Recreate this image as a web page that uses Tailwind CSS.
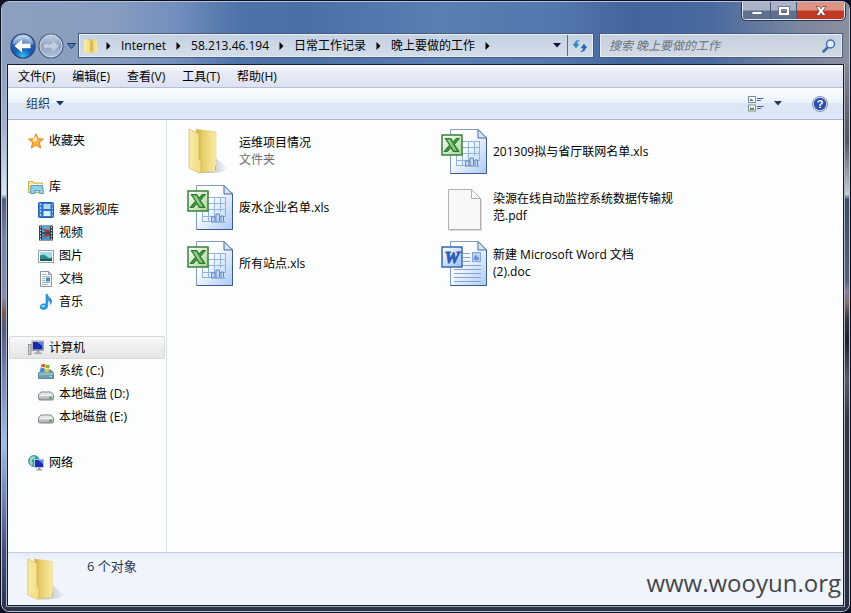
<!DOCTYPE html>
<html lang="zh-CN">
<head>
  <meta charset="UTF-8" />
  <meta name="viewport" content="width=device-width, initial-scale=1.0" />
  <title>晚上要做的工作</title>
  <script src="https://cdn.jsdelivr.net/npm/@tailwindcss/browser@4"></script>
</head>
<body class="flex h-screen flex-col bg-[#0b1020] p-px font-['Open_Sans','Noto_Sans_CJK_SC',sans-serif] text-xs text-black">

  <!-- Shared icons -->
  <svg class="absolute h-0 w-0" aria-hidden="true">
    <defs>
      <linearGradient id="page" x1="0" y1="0" x2="1" y2="1">
        <stop offset="0.35" stop-color="#ffffff" /><stop offset="1" stop-color="#a9c9f5" />
      </linearGradient>
      <linearGradient id="flap" x1="0" y1="0" x2="1" y2="0">
        <stop offset="0" stop-color="#f9eca8" /><stop offset="1" stop-color="#f2dc80" />
      </linearGradient>
      <linearGradient id="inner" x1="0" y1="0" x2="1" y2="0">
        <stop offset="0" stop-color="#cfae45" /><stop offset="0.35" stop-color="#e8ce6a" /><stop offset="1" stop-color="#f8eba8" />
      </linearGradient>
      <linearGradient id="shade" x1="0" y1="0" x2="1" y2="0">
        <stop offset="0" stop-color="#8d8f9c" stop-opacity="0.8" /><stop offset="1" stop-color="#8d8f9c" stop-opacity="0" />
      </linearGradient>
      <linearGradient id="green" x1="0" y1="0" x2="1" y2="1">
        <stop offset="0" stop-color="#ffffff" /><stop offset="1" stop-color="#a5d392" />
      </linearGradient>
      <linearGradient id="blue" x1="0" y1="0" x2="1" y2="1">
        <stop offset="0" stop-color="#ffffff" /><stop offset="1" stop-color="#9dbdf0" />
      </linearGradient>
      <linearGradient id="metal" x1="0" y1="0" x2="0" y2="1">
        <stop offset="0" stop-color="#f4f5f6" /><stop offset="1" stop-color="#a4a8ad" />
      </linearGradient>
      <radialGradient id="back" cx="0.5" cy="0.95" r="0.85">
        <stop offset="0" stop-color="#35c4f5" /><stop offset="0.45" stop-color="#1459b4" /><stop offset="0.75" stop-color="#2a5fb0" /><stop offset="1" stop-color="#9fc0e6" />
      </radialGradient>
      <linearGradient id="forward" x1="0" y1="0" x2="0" y2="1">
        <stop offset="0" stop-color="#c4d0e2" /><stop offset="0.5" stop-color="#8fa3c2" /><stop offset="1" stop-color="#b4c2d8" />
      </linearGradient>
    </defs>

    <symbol id="folder" viewBox="0 0 48 48">
      <path d="M27 30 L42 41 Q38 46 24 46 L13 46Z" fill="url(#shade)" />
      <path d="M9 2 L29 5 V42 Q29 44 27 44 L12 46 L10 40Z" fill="url(#inner)" stroke="#e3cf85" stroke-width="0.6" />
      <path d="M2 2 L12 7 V32 L14 34 V45 L12 46 L2 41Z" fill="url(#flap)" stroke="#d3b85c" stroke-width="0.7" />
      <path d="M28.500 39v4" stroke="#8fc4b4" />
    </symbol>

    <symbol id="xls" viewBox="0 0 48 48">
      <path d="M9.500 2.500H37L45.500 11V46.500H9.500Z" fill="url(#page)" stroke="#7f9cc4" />
      <path d="M45.500 11V46.500H9.500" fill="none" stroke="#3e5a8c" />
      <path d="M37 2.500V11H45.500Z" fill="#d5e4f8" stroke="#4a6a98" />
      <path d="M21 14.500H39M21 20.500H39M15 26.500H39M15 33.500H39M15 38.500H31M15.500 26V39M21.500 26V39M27.500 14V38M33.500 14V29M38.500 14V34" fill="none" stroke="#93b2dc" />
      <path d="M24.500 38V34H28V38M29 38V31H32.500V38M34 38V33H36.500V38M24 39H38" fill="#c7dbf5" stroke="#5a87c4" />
      <rect x="1" y="8" width="20" height="20" fill="url(#green)" stroke="#3c7d3f" stroke-width="1.500" />
      <path d="M4 11.500H10L12 15L15 11.500H18.500L13.500 17.500L18 24.500H12L10 20.500L6.500 24.500H3L8.500 18Z" fill="#3c9440" stroke="#1d6428" stroke-width="0.800" />
      <path d="M6 12.500H9L15.500 23.500H13Z" fill="#8fcf7e" />
    </symbol>

    <symbol id="blank" viewBox="0 0 48 48">
      <path d="M8 47.500H40.500V16" fill="none" stroke="#d9d9d9" />
      <path d="M7.500 6.500H30.500L39.500 15.500V46.500H7.500Z" fill="#f8f8f8" stroke="#b0b0b0" />
      <path d="M30.500 6.500V15.500H39.500Z" fill="#ffffff" stroke="#b0b0b0" />
    </symbol>

    <symbol id="star" viewBox="0 0 16 16">
      <path d="M8 0.800 L10.100 5.700 L15.400 6.100 L11.400 9.600 L12.700 15 L8 12.200 L3.300 15 L4.600 9.600 L0.600 6.100 L5.900 5.700Z" fill="#fbb040" stroke="#dd7a1e" stroke-width="0.900" />
      <path d="M8 3 L9.300 6.500 L7 9 L4.500 7Z" fill="#fff0b0" />
    </symbol>

    <symbol id="library" viewBox="0 0 16 16">
      <path d="M0.500 2.500H5L6 4H14.500V13.500H0.500Z" fill="#f6e28c" stroke="#cfae4a" />
      <path d="M1 5.500H15" stroke="#fff7c8" />
      <path d="M3 6.500H14.500L15.500 14.500H11.500V11.500H7V14.500H2.500Z" fill="#8fd0ee" stroke="#5a9ccb" />
    </symbol>

    <symbol id="movies" viewBox="0 0 16 16">
      <rect x="0.500" y="0.500" width="15" height="15" rx="1" fill="#2f74c8" stroke="#2360ad" />
      <path d="M2.500 1.500V15" stroke="#b5d8f8" stroke-width="1.500" stroke-dasharray="2 1.500" />
      <rect x="5.500" y="2" width="7" height="5" fill="#b5d8f8" /><rect x="5.500" y="9" width="7" height="5" fill="#dff0ff" />
      <path d="M14.500 2V14" stroke="#9cc8f2" stroke-dasharray="1.500 2" />
    </symbol>

    <symbol id="video" viewBox="0 0 16 16">
      <rect x="1" y="0.500" width="14" height="15" fill="#2e3a44" />
      <path d="M2.500 1.500V15M13.500 1.500V15" stroke="#d5dde2" stroke-width="1.200" stroke-dasharray="1.500 1.500" />
      <rect x="4" y="1" width="8" height="6.500" fill="#5aa9dc" /><rect x="4" y="8.500" width="8" height="6.500" fill="#4a92c8" />
      <path d="M4 4L8 7.500H12V5ZM4 12L8 8.500H12V11Z" fill="#a33d38" />
      <path d="M4 8H12" stroke="#263039" />
    </symbol>

    <symbol id="picture" viewBox="0 0 16 16">
      <rect x="0.500" y="2.500" width="15" height="12" fill="#ffffff" stroke="#9a9fa3" />
      <rect x="2" y="4" width="12" height="9" fill="#9fdcea" />
      <path d="M2 7.500Q6 5.500 9 8.500T14 8.500V13H2Z" fill="#2c8d88" />
      <path d="M2 11H14V13H2Z" fill="#175f66" />
    </symbol>

    <symbol id="document" viewBox="0 0 16 16">
      <path d="M2.500 0.500H10.500L13.500 3.500V15.500H2.500Z" fill="#ffffff" stroke="#8a949c" />
      <path d="M10.500 0.500V3.500H13.500" fill="none" stroke="#8a949c" />
      <path d="M4 3.500H9M4 5.500H12M4 7.500H7M4 9.500H7M4 11.500H12M4 13.500H10" stroke="#a5b4c0" />
      <rect x="8" y="6.500" width="4" height="4" fill="#3d8fc9" />
    </symbol>

    <symbol id="music" viewBox="0 0 16 16">
      <path d="M8 0.500H9.500Q10 3 12.500 4.500Q15 7 12.500 10.500Q13 7 9.800 6.200V12Q9.500 15 6 15.500Q2 15.500 2 12.700Q2.500 10 6 9.800L8 10Z" fill="#2c9be0" stroke="#1d79bd" stroke-width="0.600" />
      <ellipse cx="5.200" cy="12" rx="1.800" ry="1" fill="#a9ddfa" />
    </symbol>

    <symbol id="computer" viewBox="0 0 16 16">
      <rect x="0.500" y="4.500" width="2.500" height="10" fill="#d4d6d6" stroke="#7d8286" stroke-width="0.800" />
      <rect x="4" y="1" width="11.500" height="9.500" fill="#c9ccd6" stroke="#8b90a0" stroke-width="0.800" />
      <rect x="5" y="2" width="9.500" height="7.500" fill="#1729a8" />
      <path d="M9 2H14.500V6Z" fill="#5d85ea" />
      <path d="M8.500 11H11.500V12.500H14V14H6V12.500H8.500Z" fill="#a5a9af" />
    </symbol>

    <symbol id="system" viewBox="0 0 16 16">
      <path d="M2 9L4 7H13L15.500 10V15.500H0.500V10Z" fill="#6fa0b4" stroke="#47748a" stroke-width="0.800" />
      <path d="M1 11H15.500" stroke="#b9d8e2" />
      <path d="M11.500 13.500H14" stroke="#8ef0a0" />
      <path d="M3.500 1.500Q5.500 0 7.500 1.200L6.800 4.500Q4.800 3.600 2.700 4.800Z" fill="#e8602c" />
      <path d="M8 1.500Q10 2.500 12 1.500L11.300 5Q9.300 5.800 7.300 4.800Z" fill="#7fba3c" />
      <path d="M2.500 5.300Q4.600 4.200 6.600 5.200L6 8.500Q4 7.600 1.800 8.700Z" fill="#3d8bd6" />
      <path d="M7.200 5.500Q9.200 6.500 11.200 5.600L10.500 9Q8.500 9.700 6.500 8.800Z" fill="#f7c52e" />
    </symbol>

    <symbol id="disk" viewBox="0 0 16 16">
      <path d="M3 6H13L15.500 9V12.500Q15.500 14 14 14H2Q0.500 14 0.500 12.500V9Z" fill="url(#metal)" stroke="#767b80" stroke-width="0.900" />
      <path d="M1 9.300H15" stroke="#fafafa" />
      <rect x="11.500" y="10.500" width="2" height="2.500" fill="#3da548" />
    </symbol>

    <symbol id="network" viewBox="0 0 16 16">
      <circle cx="6" cy="6" r="5.500" fill="#2a9fb8" stroke="#2b7f9e" stroke-width="0.700" />
      <path d="M2 3Q5 0 7.500 2Q6.500 5 4 4.500Q3 7 5 8L4 11Q0.500 8 2 3Z" fill="#9de0b8" />
      <rect x="6.500" y="4.500" width="9" height="8" fill="#1b2fb0" stroke="#b9c3da" />
      <path d="M10 5H15V9Z" fill="#5788f0" />
      <path d="M10 13H12.500V14.500H14.500V15.500H8V14.500H10Z" fill="#8e96a3" />
    </symbol>

    <symbol id="crumb" viewBox="0 0 5 8"><path d="M0.500 0L4.500 4L0.500 8Z" fill="#000000" /></symbol>
    <symbol id="down" viewBox="0 0 8 5"><path d="M0 0H8L4 4.500Z" fill="currentColor" /></symbol>
  </svg>

  <div class="flex min-h-0 flex-1 flex-col overflow-hidden rounded-lg border border-[#b4c3da] bg-[#2c3348]">

    <!-- Title bar and address row -->
    <header class="shrink-0 bg-[linear-gradient(90deg,#8d9fbe_0%,#879dc1_13%,#7590bd_20%,#4d73aa_28%,#4a70a8_36%,#5a7fb2_52%,#5277ad_66%,#42659c_74%,#4a6a9f_84%,#7b879f_94%,#8b8f9c_100%)]">
      <div class="flex h-[18px] justify-end pr-1">
        <div class="flex overflow-hidden rounded-b border border-t-0 border-[#dfe6f0] outline outline-[#2b3852]">
          <button type="button" aria-label="最小化" class="flex w-7 items-center justify-center border-r border-[#4a5875] bg-linear-to-b from-[#aab4c6] from-45% to-[#5f6f8e] to-55%">
            <svg class="h-3 w-3" viewBox="0 0 12 12"><rect x="1" y="6.500" width="10" height="3" fill="#fff" stroke="#4c566b" stroke-width="0.700" /></svg>
          </button>
          <button type="button" aria-label="最大化" class="flex w-[26px] items-center justify-center border-r border-[#4a5875] bg-linear-to-b from-[#aab4c6] from-45% to-[#5f6f8e] to-55%">
            <svg class="h-3 w-3" viewBox="0 0 12 12"><path d="M0.500 1.500H11.500V10.500H0.500ZM3.500 4.500V7.500H8.500V4.500Z" fill="#fff" fill-rule="evenodd" stroke="#4c566b" stroke-width="0.700" /></svg>
          </button>
          <button type="button" aria-label="关闭" class="flex w-[47px] items-center justify-center bg-linear-to-b from-[#dd9384] from-45% to-[#c23a22] to-55%">
            <svg class="h-3 w-3" viewBox="0 0 12 12"><path d="M1 1.500H4.200L6 3.800L7.800 1.500H11L7.800 6L11 10.500H7.800L6 8.200L4.200 10.500H1L4.200 6Z" fill="#fff" stroke="#5a3434" stroke-width="0.700" /></svg>
          </button>
        </div>
      </div>

      <div class="mt-3.5 mb-[7px] flex h-[23px] items-center pr-[7px] pl-2">
        <button type="button" aria-label="后退" class="shrink-0">
          <svg class="h-[26px] w-[26px]" viewBox="0 0 26 26">
            <circle cx="13" cy="13" r="12" fill="url(#back)" stroke="#263f70" stroke-width="1.200" />
            <path d="M3 11Q5 2.500 13 2.500T23 11Q13 13.500 3 11Z" fill="#ffffff" opacity="0.35" />
            <path d="M4.500 13L12 6.500V10.800H20.500V15.200H12V19.500Z" fill="#ffffff" />
          </svg>
        </button>
        <button type="button" aria-label="前进" class="ml-0.5 shrink-0">
          <svg class="h-[26px] w-[26px]" viewBox="0 0 26 26">
            <circle cx="13" cy="13" r="12" fill="url(#forward)" stroke="#4b5f84" stroke-width="1.200" />
            <circle cx="13" cy="13" r="11" fill="none" stroke="#d6dfeb" stroke-width="0.800" />
            <path d="M21 13L14 7V11H6V15H14V19Z" fill="#c3cede" stroke="#a3b3cb" stroke-width="0.600" />
          </svg>
        </button>
        <button type="button" aria-label="最近的页面" class="mx-[3px] shrink-0">
          <svg class="h-2 w-[9px]" viewBox="0 0 9 8"><path d="M0.500 1.500H8.500L4.500 6.500Z" fill="#4f83bd" stroke="#1d3a68" /></svg>
        </button>

        <nav aria-label="地址" class="flex h-full min-w-0 flex-1 items-center border border-[#e6edf5] bg-linear-to-b from-[#c5d2e3] to-[#d3dde9] outline outline-[#4a5c7c]">
          <svg class="ml-0.5 h-[18px] w-[18px] shrink-0" viewBox="0 0 18 18">
            <path d="M7 2L15 3V15L8 16Z" fill="url(#inner)" /><path d="M2 2L8 3.500V16.500L2 15Z" fill="url(#flap)" /><path d="M10 4V14" stroke="#c6a84a" />
          </svg>
          <ol class="flex min-w-0 flex-1 items-center gap-2.5 pl-1.5 whitespace-nowrap">
            <li><svg class="h-2 w-[5px]"><use href="#crumb" /></svg></li>
            <li><a href="#">Internet</a></li>
            <li><svg class="h-2 w-[5px]"><use href="#crumb" /></svg></li>
            <li><a href="#">58.213.46.194</a></li>
            <li><svg class="h-2 w-[5px]"><use href="#crumb" /></svg></li>
            <li><a href="#">日常工作记录</a></li>
            <li><svg class="h-2 w-[5px]"><use href="#crumb" /></svg></li>
            <li><a href="#">晚上要做的工作</a></li>
            <li><svg class="h-2 w-[5px]"><use href="#crumb" /></svg></li>
          </ol>
          <button type="button" aria-label="以前的位置" class="flex h-full w-5 shrink-0 items-center justify-center text-[#0c1440]">
            <svg class="h-[5px] w-2"><use href="#down" /></svg>
          </button>
          <button type="button" aria-label="刷新" class="flex h-full w-[25px] shrink-0 items-center justify-center border-l border-[#5c6c86]">
            <svg class="h-[14px] w-[14px]" viewBox="0 0 14 14">
              <path d="M6.500 1.500Q3.500 2 3.800 5H6L3 9L0 5H2Q1.500 1 6.500 1.500Z" fill="#2c86c4" stroke="#2c86c4" stroke-width="0.500" />
              <path d="M7.500 12.500Q10.500 12 10.200 9H8L11 5L14 9H12Q12.500 13 7.500 12.500Z" fill="#2767b0" stroke="#2767b0" stroke-width="0.500" />
            </svg>
          </button>
        </nav>

        <form role="search" class="ml-[7px] flex h-full w-[242px] shrink-0 items-center border border-[#e6edf5] bg-linear-to-b from-[#c6d0de] to-[#d3dae4] pr-1 pl-2 outline outline-[#4a5c7c]">
          <input type="search" aria-label="搜索" placeholder="搜索 晚上要做的工作" class="min-w-0 flex-1 bg-transparent italic outline-none placeholder:text-[#69727f]" />
          <button type="submit" aria-label="开始搜索">
            <svg class="h-4 w-4" viewBox="0 0 16 16" fill="none"><path d="M2.500 13.500L7 9" stroke="#3b6ca5" stroke-width="2.500" stroke-linecap="round" /><circle cx="9.500" cy="6" r="4" fill="#e4eef8" stroke="#3f73b5" stroke-width="1.500" /></svg>
          </button>
        </form>
      </div>
    </header>

    <div class="flex min-h-0 flex-1">
      <!-- Left glass edge -->
      <div class="w-[5px] shrink-0 border-r border-[#aab8d0] bg-[linear-gradient(180deg,#8b9dc0_0%,#a3b2cf_12%,#dfe5ef_24%,#4f5e7c_25%,#7c83a6_32%,#8a8ea8_43%,#7a5a50_46%,#535c80_49%,#7789b0_58%,#a3bde4_70%,#7085b3_80%,#46507a_90%,#2c3350_100%)]"></div>

      <div class="flex min-w-0 flex-1 flex-col border border-[#151c30] bg-[#fcfdfd]">
        <!-- Menu -->
        <nav aria-label="菜单" class="flex h-[23px] shrink-0 items-center gap-[17px] border-b border-[#b4bfd2] bg-linear-to-b from-[#ffffff] via-[#e9ecf7] via-30% to-[#dde2f2] px-2.5 pt-0.5">
          <button type="button">文件(F)</button>
          <button type="button">编辑(E)</button>
          <button type="button">查看(V)</button>
          <button type="button">工具(T)</button>
          <button type="button">帮助(H)</button>
        </nav>

        <!-- Toolbar -->
        <div class="flex h-8 shrink-0 items-center border-b border-[#a9b8ce] bg-[linear-gradient(180deg,#fafdff_0%,#e9f3fc_48%,#dce6f4_50%,#dde7f5_100%)] pr-[15px] pl-[18px] text-[#1e395b]">
          <button type="button" class="flex items-center gap-1.5">组织 <svg class="h-[5px] w-2"><use href="#down" /></svg></button>
          <button type="button" aria-label="更改视图" class="ml-auto">
            <svg class="h-4 w-4" viewBox="0 0 16 16">
              <rect x="0.500" y="0.500" width="7" height="6" fill="#fff" stroke="#7d8ca0" /><rect x="0.500" y="9" width="7" height="6" fill="#fff" stroke="#7d8ca0" />
              <path d="M2 5V3L4 3.500L6 5Z" fill="#2f6d8a" /><path d="M2 11L4 12.500L6 11V14H2Z" fill="#4c8c3b" />
              <path d="M9 2.500H15.500M9 4.500H13M9 10.500H15.500M9 12.500H13" stroke="#47608c" />
            </svg>
          </button>
          <button type="button" aria-label="更多视图" class="ml-2.5"><svg class="h-[5px] w-2"><use href="#down" /></svg></button>
          <button type="button" aria-label="帮助" class="ml-[30px]">
            <svg class="h-4 w-4" viewBox="0 0 16 16">
              <circle cx="8" cy="8" r="7.500" fill="#e6ecf5" stroke="#74849e" stroke-width="0.900" /><circle cx="8" cy="8" r="6.200" fill="#2a4eb0" />
              <text x="8" y="12" text-anchor="middle" font-family="Liberation Sans, sans-serif" font-size="11" font-weight="bold" fill="#ffffff">?</text>
            </svg>
          </button>
        </div>

        <div class="flex min-h-0 flex-1">
          <!-- Navigation pane -->
          <nav aria-label="导航" class="w-[159px] shrink-0 overflow-hidden border-r border-[#d5dfec] pt-[9px] pr-px pl-px">
            <ul class="space-y-[23px]">
              <li>
                <a href="#" class="flex h-[23px] items-center gap-[5px] pl-[19px]"><svg class="h-4 w-4"><use href="#star" /></svg>收藏夹</a>
              </li>
              <li>
                <a href="#" class="flex h-[23px] items-center gap-[5px] pl-[19px]"><svg class="h-4 w-4"><use href="#library" /></svg>库</a>
                <ul>
                  <li><a href="#" class="flex h-[23px] items-center gap-[5px] pl-[29px]"><svg class="h-4 w-4"><use href="#movies" /></svg>暴风影视库</a></li>
                  <li><a href="#" class="flex h-[23px] items-center gap-[5px] pl-[29px]"><svg class="h-4 w-4"><use href="#video" /></svg>视频</a></li>
                  <li><a href="#" class="flex h-[23px] items-center gap-[5px] pl-[29px]"><svg class="h-4 w-4"><use href="#picture" /></svg>图片</a></li>
                  <li><a href="#" class="flex h-[23px] items-center gap-[5px] pl-[29px]"><svg class="h-4 w-4"><use href="#document" /></svg>文档</a></li>
                  <li><a href="#" class="flex h-[23px] items-center gap-[5px] pl-[29px]"><svg class="h-4 w-4"><use href="#music" /></svg>音乐</a></li>
                </ul>
              </li>
              <li>
                <a href="#" aria-current="true" class="flex h-[23px] items-center gap-[5px] rounded-xs border border-[#d9d9d9] bg-linear-to-b from-[#f8f8f8] to-[#e5e5e5] pl-[18px]"><svg class="h-4 w-4"><use href="#computer" /></svg>计算机</a>
                <ul>
                  <li><a href="#" class="flex h-[23px] items-center gap-[5px] pl-[29px]"><svg class="h-4 w-4"><use href="#system" /></svg>系统 (C:)</a></li>
                  <li><a href="#" class="flex h-[23px] items-center gap-[5px] pl-[29px]"><svg class="h-4 w-4"><use href="#disk" /></svg>本地磁盘 (D:)</a></li>
                  <li><a href="#" class="flex h-[23px] items-center gap-[5px] pl-[29px]"><svg class="h-4 w-4"><use href="#disk" /></svg>本地磁盘 (E:)</a></li>
                </ul>
              </li>
              <li>
                <a href="#" class="flex h-[23px] items-center gap-[5px] pl-[19px]"><svg class="h-4 w-4"><use href="#network" /></svg>网络</a>
              </li>
            </ul>
          </nav>

          <!-- Files -->
          <main class="min-w-0 flex-1 overflow-auto pt-[3px] pl-5">
            <ul class="grid grid-cols-[repeat(2,254px)] auto-rows-[56px] leading-[17px]">
              <li class="flex items-center gap-1">
                <svg class="h-12 w-12 shrink-0"><use href="#folder" /></svg>
                <div><p>运维项目情况</p><p class="text-[#6d6d6d]">文件夹</p></div>
              </li>
              <li class="flex items-center gap-1">
                <svg class="h-12 w-12 shrink-0"><use href="#xls" /></svg>
                <p class="max-w-[180px]">201309拟与省厅联网名单.xls</p>
              </li>
              <li class="flex items-center gap-1">
                <svg class="h-12 w-12 shrink-0"><use href="#xls" /></svg>
                <p class="max-w-[180px]">废水企业名单.xls</p>
              </li>
              <li class="flex items-center gap-1">
                <svg class="h-12 w-12 shrink-0"><use href="#blank" /></svg>
                <p class="max-w-[180px]">染源在线自动监控系统数据传输规范.pdf</p>
              </li>
              <li class="flex items-center gap-1">
                <svg class="h-12 w-12 shrink-0"><use href="#xls" /></svg>
                <p class="max-w-[180px]">所有站点.xls</p>
              </li>
              <li class="flex items-center gap-1">
                <svg class="h-12 w-12 shrink-0" viewBox="0 0 48 48">
                  <path d="M9.500 2.500H37L45.500 11V46.500H9.500Z" fill="url(#page)" stroke="#7f9cc4" />
                  <path d="M45.500 11V46.500H9.500" fill="none" stroke="#3e5a8c" />
                  <path d="M37 2.500V11H45.500Z" fill="#d5e4f8" stroke="#4a6a98" />
                  <path d="M22 14.500H29M22 18.500H29M22 22.500H29M22 26.500H40M13 30.500H40M13 34.500H40M13 38.500H40M13 42.500H40" stroke="#86a5d2" />
                  <rect x="31.500" y="13.500" width="8" height="9" fill="#b8cff2" stroke="#86a5dc" />
                  <path d="M33 21v-3l2-2 2 3 1-1v3Z" fill="#6d92cf" />
                  <rect x="1" y="8" width="20" height="20" fill="url(#blue)" stroke="#3767b0" stroke-width="1.500" />
                  <text x="11" y="24" text-anchor="middle" font-family="Liberation Serif, serif" font-size="17" font-weight="bold" font-style="italic" fill="#2a5db5" stroke="#2a5db5" stroke-width="0.900">W</text>
                </svg>
                <p class="max-w-[180px]">新建 Microsoft Word 文档 (2).doc</p>
              </li>
            </ul>
          </main>
        </div>

        <!-- Details pane -->
        <footer class="flex h-[53px] shrink-0 items-start border-t border-[#c3d0e2] bg-linear-to-b from-[#e6edf7] to-[#f1f4fb] to-15% pr-0.5 pl-[18px]">
          <svg class="mt-1 h-11 w-11 shrink-0"><use href="#folder" /></svg>
          <p class="mt-1 ml-[17px] text-[13px] leading-[18px] text-[#1e395b]">6 个对象</p>
          <p class="ml-auto self-end pb-1.5 text-2xl text-[#45464c]">www.wooyun.org</p>
        </footer>
      </div>

      <!-- Right glass edge -->
      <div class="w-[5px] shrink-0 border-l border-[#aeb5c2] bg-[linear-gradient(180deg,#858894_0%,#55545f_14%,#c5ccd2_24%,#3d4c66_25%,#59617a_40%,#8a7f9a_42%,#8c6f67_44%,#33343f_47%,#1e1e2a_51%,#5a5866_58%,#33343f_66%,#2b3040_100%)]"></div>
    </div>
    <div class="mx-1 h-[5px] shrink-0 border-t border-[#9aa4b8] bg-[#2c3348]"></div>
  </div>

</body>
</html>
